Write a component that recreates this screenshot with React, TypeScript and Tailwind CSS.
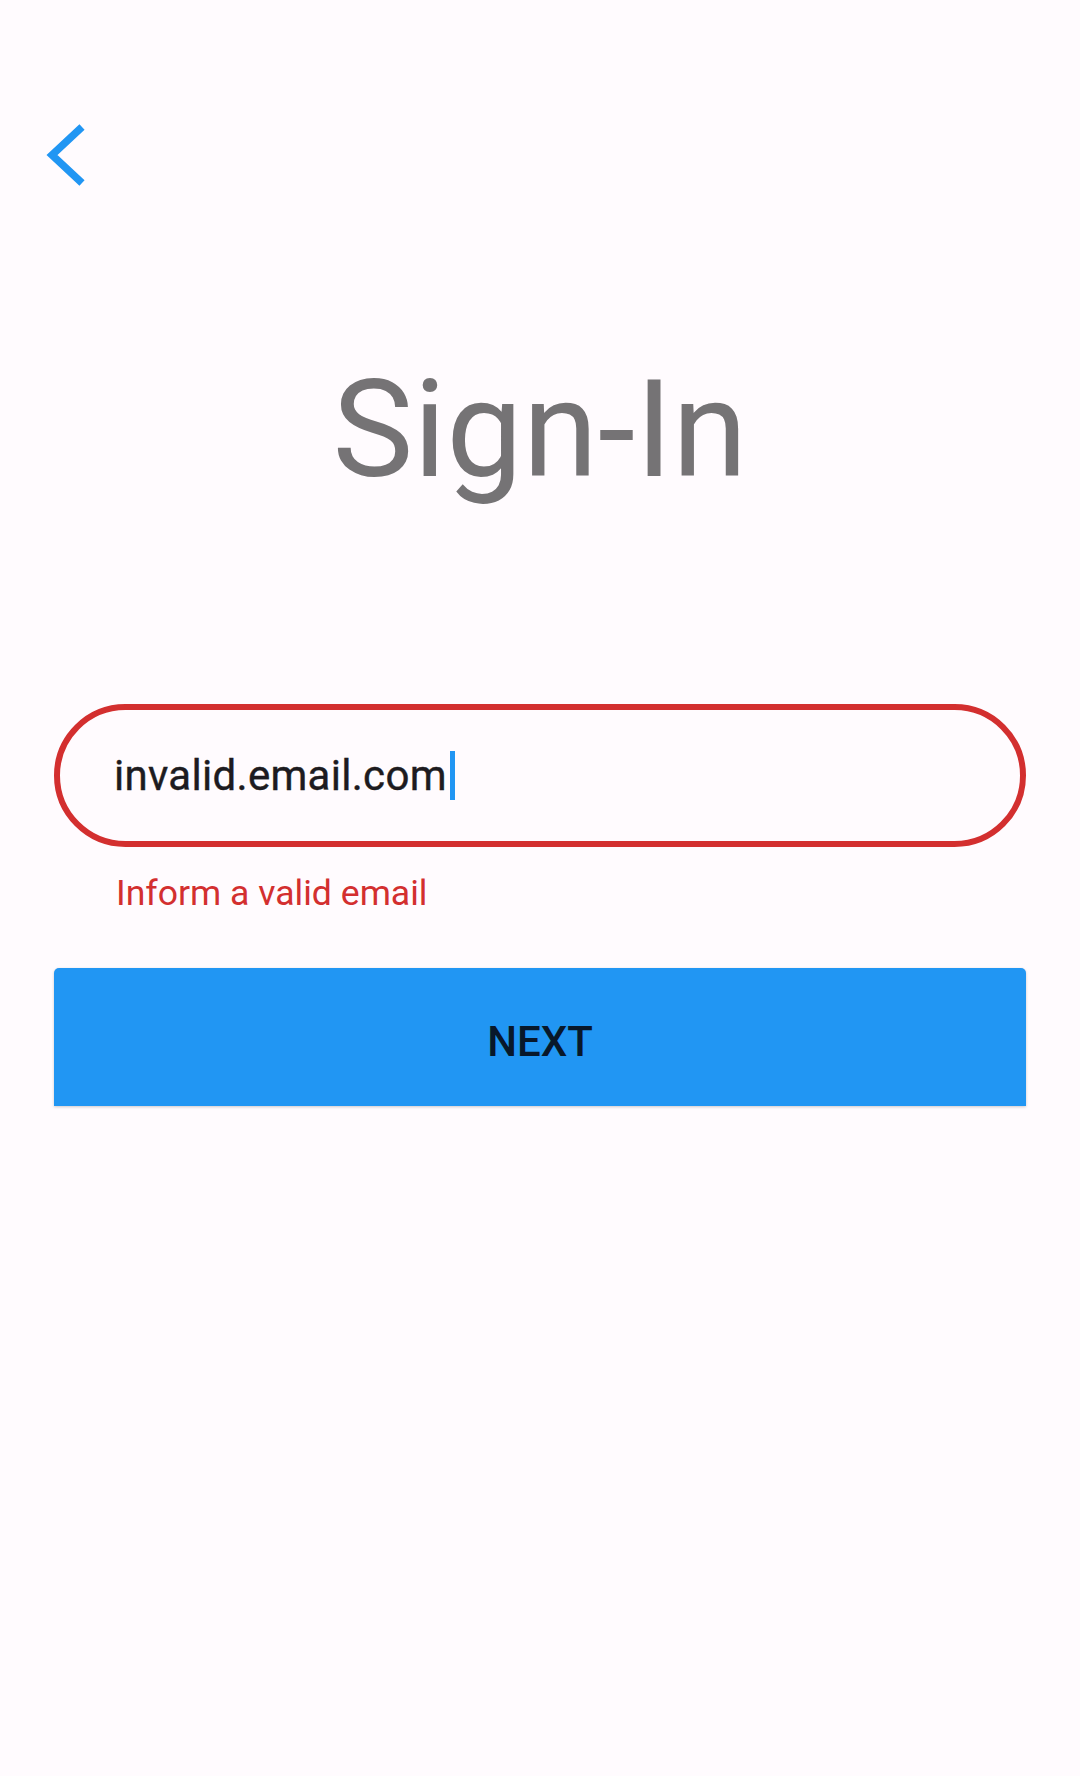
const BackArrow = () => (
    <svg width="50" height="74" viewBox="0 0 50 74" fill="none">
        <polyline points="42,9 12,37 42,65" stroke="#2196F3" strokeWidth="7.5" strokeLinecap="butt" strokeLinejoin="miter" />
    </svg>
);

export default function App() {
    return (
        <div className="min-h-[1776px] w-full bg-[#FFFBFE] font-['Roboto',sans-serif] flex flex-col">
            {/* Top bar with back button */}
            <div className="pt-[118px] pl-[40px] flex">
                <button className="flex">
                    <BackArrow />
                </button>
            </div>

            {/* Title */}
            <h1 className="mt-[170px] text-center text-[136px] leading-[136px] text-[#757375] font-normal">
                Sign-In
            </h1>

            {/* Form */}
            <div className="px-[54px] flex flex-col">
                <div className="mt-[206px] h-[143px] rounded-full border-[6px] border-[#D32F2F] flex items-center pl-[54px]">
                    <span className="text-[42px] tracking-[0.3px] text-[#1D1B20] [-webkit-text-stroke:0.4px_#1D1B20]">invalid.email.com</span>
                    <span className="ml-[3px] w-[5px] h-[49px] bg-[#2196F3]" />
                </div>

                <p className="mt-[25px] pl-[62px] text-[35.6px] leading-[42px] text-[#D32F2F]">
                    Inform a valid email
                </p>

                <button className="mt-[54px] h-[138px] w-full pt-[9px] rounded-t-[5px] bg-[#2196F3] shadow-[0_1px_3px_rgba(0,0,0,0.2)] text-[42px] font-medium text-[#08182A]">
                    NEXT
                </button>
            </div>
        </div>
    );
}
